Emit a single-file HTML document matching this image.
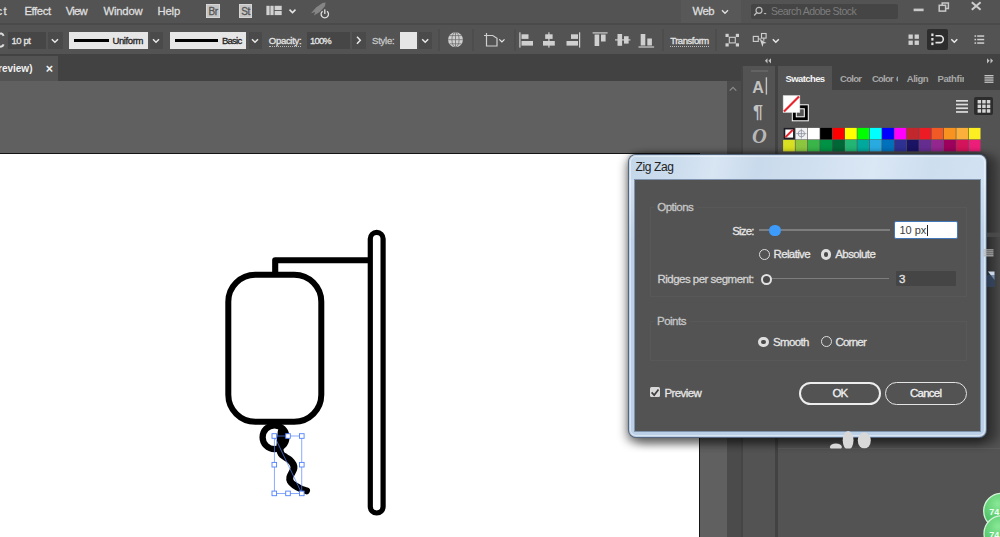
<!DOCTYPE html>
<html><head><meta charset="utf-8"><title>Zig Zag</title>
<style>
html,body{margin:0;padding:0;}
body{width:1000px;height:537px;overflow:hidden;position:relative;background:#535353;font-family:"Liberation Sans",sans-serif;}
.a{position:absolute;}
.t{position:absolute;white-space:pre;}
svg{position:absolute;left:0;top:0;overflow:visible;}
</style></head><body>
<!-- menubar -->
<div class="a" style="left:0;top:0;width:1000px;height:24px;background:#535353"></div>
<div class="a" style="left:681px;top:0;width:60px;height:24px;background:#585858"></div>
<div class="a" style="left:0;top:23px;width:1000px;height:2px;background:#4a4a4a"></div>
<!-- Br / St -->
<div class="a" style="left:206.2px;top:4.3px;width:13.6px;height:13.7px;background:#c4c4c4;box-shadow:inset 0 0 0 1px #d6d6d6"></div>
<div class="a" style="left:238.6px;top:4.3px;width:13.6px;height:13.7px;background:#c4c4c4;box-shadow:inset 0 0 0 1px #d6d6d6"></div>
<!-- search -->
<div class="a" style="left:751px;top:3.5px;width:147px;height:15px;background:#454545;border-radius:2px"></div>
<!-- control bar fields -->
<div class="a" style="left:8px;top:32px;width:38px;height:16.5px;background:#464646"></div>
<div class="a" style="left:47.5px;top:32px;width:15px;height:16.5px;background:#4a4a4a"></div>
<div class="a" style="left:69px;top:32px;width:79px;height:16.7px;background:#e6e6e6"></div>
<div class="a" style="left:149.5px;top:32px;width:13px;height:16.5px;background:#4a4a4a"></div>
<div class="a" style="left:170px;top:32px;width:76.3px;height:16.7px;background:#e6e6e6"></div>
<div class="a" style="left:248.5px;top:32px;width:13px;height:16.5px;background:#4a4a4a"></div>
<div class="a" style="left:307px;top:32px;width:43px;height:16.5px;background:#464646"></div>
<div class="a" style="left:352px;top:32px;width:13.5px;height:16.5px;background:#4a4a4a"></div>
<div class="a" style="left:400px;top:32px;width:17px;height:16.7px;background:#e6e6e6"></div>
<div class="a" style="left:419px;top:32px;width:12.5px;height:16.5px;background:#4a4a4a"></div>
<div class="a" style="left:927px;top:29px;width:20.5px;height:20.5px;background:#2d2d2d;border-radius:2px"></div>
<!-- stroke previews -->
<div class="a" style="left:74px;top:39px;width:35px;height:2.6px;background:#000"></div>
<div class="a" style="left:175px;top:39px;width:43px;height:2.6px;background:#000"></div>
<!-- doc tab bar -->
<div class="a" style="left:0;top:54px;width:1000px;height:27px;background:#424242"></div>
<div class="a" style="left:0;top:56.2px;width:58px;height:24.8px;background:#535353"></div>
<span class="t" style="left:45.7px;top:61.5px;font-size:12.5px;line-height:14px;font-weight:700;color:#f2f2f2">×</span>
<!-- canvas -->
<div class="a" style="left:0;top:80.5px;width:727px;height:457px;background:#606060"></div>
<div class="a" style="left:-2px;top:153px;width:700px;height:400px;background:#fff;border:1px solid #141414"></div>
<!-- scrollbar -->
<div class="a" style="left:727px;top:80.5px;width:14px;height:457px;background:#4b4b4b"></div>
<!-- dock -->
<div class="a" style="left:741px;top:54px;width:259px;height:483px;background:#424242"></div>
<div class="a" style="left:741px;top:66px;width:1.5px;height:471px;background:#454545"></div>
<div class="a" style="left:742.5px;top:66px;width:32.5px;height:471px;background:#535353"></div>
<div class="a" style="left:750.5px;top:70px;width:17px;height:1.5px;background:#636363"></div>
<div class="a" style="left:777.5px;top:66px;width:223px;height:471px;background:#535353"></div>
<div class="a" style="left:832px;top:66px;width:168px;height:24px;background:#424242"></div>
<div class="a" style="left:777.5px;top:448px;width:223px;height:1px;background:#5c5c5c"></div>
<!-- clipped tab titles -->
<div class="a" style="left:871.9px;top:72.5px;width:26.6px;height:12px;overflow:hidden"><span class="t" style="left:0;top:0;font-size:9.5px;line-height:11px;font-weight:700;color:#a8a8a8;letter-spacing:-0.72px;word-spacing:1px">Color Guide</span></div>
<div class="a" style="left:937.4px;top:72.5px;width:26.8px;height:12px;overflow:hidden"><span class="t" style="left:0;top:0;font-size:9.5px;line-height:11px;font-weight:700;color:#a8a8a8;letter-spacing:-0.35px">Pathfinder</span></div>
<!-- list/grid buttons -->
<div class="a" style="left:974px;top:96.5px;width:19px;height:18.7px;background:#2c2c2c;border-radius:2px"></div>
<!-- icons svg (under dialog) -->
<svg width="1000" height="537" viewBox="0 0 1000 537">
<!-- ARTWORK -->
<g fill="none" stroke="#000" stroke-linecap="round" stroke-linejoin="miter">
<rect x="370.3" y="232.4" width="12.8" height="280.6" rx="6.4" stroke-width="5.2"/>
<path d="M275.2 273 V260.3 H370" stroke-width="6.1" stroke-linecap="butt" stroke-linejoin="round"/>
<rect x="228.3" y="274.8" width="93" height="147" rx="27" stroke-width="6"/>
<circle cx="274.5" cy="437.2" r="11.9" stroke-width="6.3"/>
<path d="M281.3 431.5 C281.1 433.1 280.5 438.1 280.3 441.0 C280.1 443.9 279.8 446.9 279.9 449.0 C280.0 451.1 280.3 452.4 281.2 453.8 C282.1 455.2 284.0 456.2 285.5 457.3 C287.0 458.4 289.0 459.3 290.3 460.5 C291.6 461.7 292.7 463.2 293.3 464.5 C293.9 465.8 294.1 466.9 293.9 468.3 C293.7 469.7 292.7 471.2 292.0 472.6 C291.3 474.0 290.2 475.4 289.9 476.9 C289.6 478.3 289.6 479.9 290.3 481.3 C291.0 482.7 292.5 484.0 294.2 485.2 C295.9 486.4 298.3 487.7 300.4 488.6 C302.4 489.5 305.5 490.4 306.5 490.8" stroke-width="7"/>
</g>
<!-- selection -->
<g fill="none" stroke="#5a86ff" stroke-width="0.7">
<rect x="274.3" y="436" width="27.5" height="57.4"/>
<path d="M274.3 436 L301.8 493.4"/>
</g>
<g fill="#fff" stroke="#4f80ff" stroke-width="0.9">
<rect x="272" y="433.7" width="4.6" height="4.6"/><rect x="285.7" y="433.7" width="4.6" height="4.6"/><rect x="299.5" y="433.7" width="4.6" height="4.6"/>
<rect x="272" y="462.4" width="4.6" height="4.6"/><rect x="299.5" y="462.4" width="4.6" height="4.6"/>
<rect x="272" y="491.1" width="4.6" height="4.6"/><rect x="285.7" y="491.1" width="4.6" height="4.6"/><rect x="299.5" y="491.1" width="4.6" height="4.6"/>
</g>
<!-- SWATCHES -->
<g id="sw"><rect x="784.50" y="128.70" width="9.38" height="9.70" fill="#fff" stroke="#1c1c24" stroke-width="1.6"/>
<path d="M785.30 137.40 L792.88 129.70" stroke="#e8242c" stroke-width="2"/>
<rect x="795.48" y="127.90" width="11.78" height="11.50" fill="#f2f2f2"/>
<circle cx="801.36" cy="133.65" r="3.2" fill="none" stroke="#8a8fa0" stroke-width=".8"/>
<path d="M796.27 133.65 H806.45 M801.36 128.70 V138.60" stroke="#8a8fa0" stroke-width=".8"/>
<rect x="807.85" y="127.90" width="11.78" height="11.50" fill="#ffffff"/>
<rect x="820.23" y="127.90" width="11.78" height="11.50" fill="#000000"/>
<rect x="832.60" y="127.90" width="11.78" height="11.50" fill="#ff0000"/>
<rect x="844.98" y="127.90" width="11.78" height="11.50" fill="#ffff00"/>
<rect x="857.35" y="127.90" width="11.78" height="11.50" fill="#00ff00"/>
<rect x="869.73" y="127.90" width="11.78" height="11.50" fill="#00ffff"/>
<rect x="882.10" y="127.90" width="11.78" height="11.50" fill="#0000ff"/>
<rect x="894.48" y="127.90" width="11.78" height="11.50" fill="#ff00ff"/>
<rect x="906.85" y="127.90" width="11.78" height="11.50" fill="#c1272d"/>
<rect x="919.23" y="127.90" width="11.78" height="11.50" fill="#ed1c24"/>
<rect x="931.60" y="127.90" width="11.78" height="11.50" fill="#f15a24"/>
<rect x="943.98" y="127.90" width="11.78" height="11.50" fill="#f7931e"/>
<rect x="956.35" y="127.90" width="11.78" height="11.50" fill="#fbb03b"/>
<rect x="968.73" y="127.90" width="11.78" height="11.50" fill="#fcee21"/>
<rect x="783.10" y="139.90" width="11.78" height="11.50" fill="#d9e021"/>
<rect x="795.48" y="139.90" width="11.78" height="11.50" fill="#8cc63f"/>
<rect x="807.85" y="139.90" width="11.78" height="11.50" fill="#39b54a"/>
<rect x="820.23" y="139.90" width="11.78" height="11.50" fill="#009245"/>
<rect x="832.60" y="139.90" width="11.78" height="11.50" fill="#006837"/>
<rect x="844.98" y="139.90" width="11.78" height="11.50" fill="#22b573"/>
<rect x="857.35" y="139.90" width="11.78" height="11.50" fill="#00a99d"/>
<rect x="869.73" y="139.90" width="11.78" height="11.50" fill="#29abe2"/>
<rect x="882.10" y="139.90" width="11.78" height="11.50" fill="#0071bc"/>
<rect x="894.48" y="139.90" width="11.78" height="11.50" fill="#2e3192"/>
<rect x="906.85" y="139.90" width="11.78" height="11.50" fill="#1b1464"/>
<rect x="919.23" y="139.90" width="11.78" height="11.50" fill="#662d91"/>
<rect x="931.60" y="139.90" width="11.78" height="11.50" fill="#93278f"/>
<rect x="943.98" y="139.90" width="11.78" height="11.50" fill="#9e005d"/>
<rect x="956.35" y="139.90" width="11.78" height="11.50" fill="#d4145a"/>
<rect x="968.73" y="139.90" width="11.78" height="11.50" fill="#ed1e79"/></g>
<!-- fill / stroke -->
<rect x="792.3" y="104.8" width="16" height="16" fill="#000" stroke="#fff" stroke-width="1"/>
<rect x="796.3" y="108.8" width="8" height="8" fill="#535353" stroke="#fff" stroke-width="1"/>
<rect x="783.2" y="95.7" width="16.6" height="16.6" fill="#fff" stroke="#e8e8e8" stroke-width=".6"/>
<path d="M784 111.5 L799 96.5" stroke="#e8242c" stroke-width="2.2"/>
<!-- list icon -->
<g fill="#dcdcdc">
<rect x="956" y="100" width="12" height="1.7"/><rect x="956" y="103.7" width="12" height="1.7"/><rect x="956" y="107.4" width="12" height="1.7"/><rect x="956" y="111.1" width="12" height="1.7"/>
</g>
<g fill="#d6d6d6">
<rect x="977.6" y="100" width="3.5" height="3.5"/><rect x="982.2" y="100" width="3.5" height="3.5"/><rect x="986.8" y="100" width="3.5" height="3.5"/>
<rect x="977.6" y="104.6" width="3.5" height="3.5"/><rect x="982.2" y="104.6" width="3.5" height="3.5"/><rect x="986.8" y="104.6" width="3.5" height="3.5"/>
<rect x="977.6" y="109.2" width="3.5" height="3.5"/><rect x="982.2" y="109.2" width="3.5" height="3.5"/><rect x="986.8" y="109.2" width="3.5" height="3.5"/>
</g>
<!-- panel menu -->
<g fill="#c4c4c4"><rect x="984.5" y="75" width="9" height="1.3"/><rect x="984.5" y="77.2" width="9" height="1.3"/><rect x="984.5" y="79.4" width="9" height="1.3"/><rect x="984.5" y="81.6" width="9" height="1.3"/></g>
<!-- collapse arrows -->
<g fill="#c0c0c0">
<path d="M767.5 58.2 l-2.6 2.6 l2.6 2.6z M771 58.2 l-2.6 2.6 l2.6 2.6z"/>
<path d="M987 58.2 l2.6 2.6 l-2.6 2.6z M990.5 58.2 l2.6 2.6 l-2.6 2.6z"/>
</g>
<!-- scroll chevron -->
<path d="M729.7 90.6 l3.3 -3.3 l3.3 3.3" fill="none" stroke="#8a8a8a" stroke-width="1.3"/>
<!-- dock icons -->
<g fill="#c2c2c2">
<text x="752.2" y="92.7" font-family="Liberation Sans, sans-serif" font-size="16" font-weight="700" fill="#c2c2c2">A</text>
<rect x="765.7" y="77.3" width="1.4" height="17.3"/>
<text x="753" y="118" font-family="Liberation Sans, sans-serif" font-size="18" font-weight="700" fill="#c2c2c2">¶</text>
<text x="752" y="143.2" font-family="Liberation Serif, serif" font-size="20.5" font-style="italic" font-weight="700" fill="#b8b8b8">O</text>
</g>
<!-- TOP ICONS -->
<!-- layout icon -->
<g fill="#d2d2d2"><rect x="266.4" y="5.8" width="3.2" height="9.3"/><rect x="270.4" y="5.8" width="3.2" height="9.3"/><rect x="274.6" y="5.8" width="7.1" height="4.2"/><rect x="274.6" y="10.9" width="7.1" height="4.2"/></g>
<path d="M289.5 9.6 l3 3 l3 -3" fill="none" stroke="#e6e6e6" stroke-width="1.5"/>
<!-- rocket/power -->
<g>
<path d="M311 13.2 L316 7.5 L322.5 3 L325.6 2.6 L325 6 L320.5 11.5 L314 15.5 L315.2 12 z" fill="#858585"/>
<circle cx="324.8" cy="14.2" r="5.2" fill="#535353"/>
<path d="M322.6 11.2 A3.7 3.7 0 1 0 327 11.2" fill="none" stroke="#e2e2e2" stroke-width="1.3"/>
<rect x="324.15" y="9.4" width="1.3" height="4.6" fill="#e2e2e2"/>
</g>
<!-- web chevron -->
<path d="M722 10.3 l3 3 l3 -3" fill="none" stroke="#e0e0e0" stroke-width="1.4"/>
<!-- search icon -->
<circle cx="759" cy="10.3" r="3" fill="none" stroke="#bdbdbd" stroke-width="1.2"/>
<path d="M756.8 12.6 l-2.6 2.8" stroke="#bdbdbd" stroke-width="1.4"/>
<path d="M763.5 13 l1.6 1.6 l1.6 -1.6z" fill="#bdbdbd"/>
<!-- window controls -->
<rect x="913.6" y="8.6" width="10" height="2.6" fill="#c8c8c8"/>
<g fill="none" stroke="#c8c8c8" stroke-width="1.5"><rect x="939.2" y="5.3" width="6.4" height="5.8"/><path d="M942.2 5 V3 H948.4 V8.6 H946"/></g>
<path d="M971.8 2.2 l8.8 7.6 M980.6 2.2 l-8.8 7.6" stroke="#cdcdcd" stroke-width="2"/>
<!-- control bar chevrons -->
<g fill="none" stroke="#e8e8e8" stroke-width="1.5">
<path d="M51.8 39.2 l3.1 3 l3.1 -3"/>
<path d="M153 39.2 l3 3 l3 -3"/>
<path d="M252 39.2 l3 3 l3 -3"/>
<path d="M357 36.8 l3.3 3.5 l-3.3 3.5"/>
<path d="M422.2 39.2 l3 3 l3 -3"/>
<path d="M499.3 39.4 l2.6 2.6 l2.6 -2.6" stroke-width="1.2"/>
<path d="M772.8 39.2 l3 3 l3 -3"/>
<path d="M951.3 39.2 l3 3 l3 -3"/>
</g>
<!-- stepper arrows at left -->
<path d="M-2 34.6 q4 -2.6 5.6 1.2 M-2 45.6 q4 2.6 5.6 -1.2" fill="none" stroke="#dedede" stroke-width="2"/>
<!-- separators -->
<g fill="#484848"><rect x="438.5" y="29" width="1" height="22"/><rect x="472.5" y="29" width="1" height="22"/><rect x="514.5" y="29" width="1" height="22"/><rect x="662.5" y="29" width="1" height="22"/><rect x="715.5" y="29" width="1" height="22"/></g>
<!-- globe -->
<circle cx="455.5" cy="39.7" r="7.4" fill="#cfcfcf"/>
<g fill="none" stroke="#707070" stroke-width=".8"><path d="M455.5 32.3 V47.1 M448.1 39.7 H462.9"/><ellipse cx="455.5" cy="39.7" rx="3.6" ry="7.4"/><path d="M449.6 35.6 H461.4 M449.6 43.8 H461.4"/></g>
<!-- shape icon -->
<g fill="none" stroke="#cfcfcf" stroke-width="1.2"><path d="M486.5 33 V46 H497 V38.3 L492.8 35.5 H484"/><path d="M484 35.5 h2"/></g>
<!-- align icons -->
<g fill="#cfcfcf">
<rect x="519.3" y="32.3" width="1.2" height="15.3"/><rect x="521.5" y="34.3" width="7" height="4.6"/><rect x="521.5" y="41" width="11.5" height="4.6"/>
<rect x="548.3" y="32.3" width="1.2" height="15.3"/><rect x="545.2" y="34.3" width="7.4" height="4.6"/><rect x="543" y="41" width="11.8" height="4.6"/>
<rect x="579" y="32.3" width="1.2" height="15.3"/><rect x="571" y="34.3" width="7" height="4.6"/><rect x="566.5" y="41" width="11.5" height="4.6"/>
<rect x="592.6" y="32.3" width="15" height="1.2"/><rect x="594.6" y="34.5" width="4.6" height="11.5"/><rect x="601" y="34.5" width="4.6" height="7"/>
<rect x="615" y="39.3" width="15.4" height="1.2"/><rect x="617.5" y="34" width="4.6" height="11.8"/><rect x="624" y="36.2" width="4.6" height="7.4"/>
<rect x="638.5" y="46.4" width="15.6" height="1.2"/><rect x="640.7" y="34" width="4.6" height="11.5"/><rect x="647.3" y="38.5" width="4.6" height="7"/>
</g>
<!-- isolate icon -->
<g fill="#cfcfcf"><rect x="725.5" y="33.8" width="3.2" height="3.2"/><rect x="735.8" y="33.8" width="3.2" height="3.2"/><rect x="725.5" y="43.3" width="3.2" height="3.2"/><rect x="735.8" y="43.3" width="3.2" height="3.2"/><rect x="729.3" y="37.3" width="6" height="5.6" fill="none" stroke="#cfcfcf" stroke-width="1.1"/></g>
<!-- select similar icon -->
<g fill="none" stroke="#cfcfcf" stroke-width="1.1"><rect x="753.3" y="36.4" width="5" height="5"/><rect x="761.5" y="33.5" width="4.6" height="4.6"/><path d="M758.3 39 h3 M763.8 38.2 v2.5"/></g>
<path d="M759.8 39.3 l6.8 3.6 l-3.2 .7 l-.9 3.3z" fill="#cfcfcf"/>
<!-- 4 squares -->
<g fill="#cfcfcf"><rect x="908.5" y="34.5" width="4.3" height="4.3"/><rect x="914.6" y="34.5" width="4.3" height="4.3"/><rect x="908.5" y="40.6" width="4.3" height="4.3"/><rect x="914.6" y="40.6" width="4.3" height="4.3"/></g>
<!-- dark button icon -->
<g fill="#e4e4e4"><rect x="931.3" y="33.5" width="2.2" height="2.6"/><rect x="931.3" y="38" width="2.2" height="2.6"/><rect x="931.3" y="42.5" width="2.2" height="2.6"/></g>
<path d="M935.5 35.8 h4.4 a3.4 3.4 0 0 1 0 6.8 h-4.4" fill="none" stroke="#e4e4e4" stroke-width="1.6"/>
<!-- list icon right -->
<g fill="#cfcfcf"><rect x="974.5" y="35.3" width="1.6" height="1.5"/><rect x="977.2" y="35.3" width="7" height="1.5"/><rect x="974.5" y="38.8" width="1.6" height="1.5"/><rect x="977.2" y="38.8" width="7" height="1.5"/><rect x="974.5" y="42.3" width="1.6" height="1.5"/><rect x="977.2" y="42.3" width="7" height="1.5"/></g>
</svg>

<!-- dialog -->
<div class="a" style="left:628.5px;top:155px;width:357px;height:282px;border-radius:7px;background:#bbd0e6;box-shadow:0 0 0 1px #56667c, -1px 4px 10px 2px rgba(0,0,0,.45), 9px 3px 8px 4px rgba(0,0,0,.3), 0 -2px 4px 0 rgba(0,0,0,.3);"></div>
<div class="a" style="left:628.5px;top:155px;width:357px;height:30px;border-radius:7px 7px 0 0;background:linear-gradient(100deg,#c4d7ea 0%,#ccddee 14%,#d8e5f3 24%,#c9daec 36%,#d1e0f0 52%,#dae7f5 68%,#cddeef 84%,#d3e2f2 100%);"></div>
<div class="a" style="left:628.5px;top:180px;width:357px;height:60px;background:linear-gradient(180deg,rgba(209,224,240,1),rgba(187,208,230,0));"></div>
<div class="a" style="left:629.5px;top:156px;width:355px;height:280px;border-radius:6px;box-shadow:inset 0 0 0 1px rgba(255,255,255,.45);"></div>
<div class="a" style="left:635px;top:179.7px;width:345px;height:251.5px;background:#535353;box-shadow:0 0 0 1px #7f93ad"></div>
<!-- group boxes -->
<div class="a" style="left:649.5px;top:207px;width:317px;height:90px;border:1px solid #585858;box-sizing:border-box"></div>
<div class="a" style="left:649.5px;top:321px;width:317px;height:40px;border:1px solid #585858;box-sizing:border-box"></div>
<div class="a" style="left:654px;top:200px;width:43px;height:14px;background:#535353"></div>
<div class="a" style="left:654px;top:314px;width:36px;height:14px;background:#535353"></div>
<!-- sliders -->
<div class="a" style="left:758.5px;top:229.3px;width:131px;height:1.4px;background:#7d7d7d"></div>
<div class="a" style="left:769px;top:224.5px;width:11.5px;height:11.5px;border-radius:50%;background:#3d9bfb"></div>
<div class="a" style="left:768px;top:278px;width:121px;height:1.4px;background:#7d7d7d"></div>
<div class="a" style="left:761px;top:273.5px;width:7px;height:7px;border-radius:50%;border:2px solid #e2e2e2;background:#4a4a4a"></div>
<!-- inputs -->
<div class="a" style="left:894px;top:221px;width:64px;height:18.3px;box-sizing:border-box;border:1.7px solid #4278ba;background:#fff;border-radius:2px"></div>
<div class="a" style="left:926.6px;top:224.5px;width:1px;height:11.5px;background:#222"></div>
<div class="a" style="left:896px;top:271.2px;width:60px;height:15px;background:#454545;border-radius:1px"></div>
<!-- radios -->
<div class="a" style="left:759px;top:249px;width:9px;height:9px;border-radius:50%;border:1.2px solid #dcdcdc"></div>
<div class="a" style="left:820.5px;top:249.2px;width:4.4px;height:4.4px;border-radius:50%;border:3.2px solid #dedede;background:#4a4a4a"></div>
<div class="a" style="left:758.2px;top:336.6px;width:4.4px;height:4.4px;border-radius:50%;border:3.2px solid #dedede;background:#4a4a4a"></div>
<div class="a" style="left:820.6px;top:336.4px;width:9px;height:9px;border-radius:50%;border:1.2px solid #dcdcdc"></div>
<!-- checkbox -->
<div class="a" style="left:649.7px;top:387.2px;width:10.3px;height:10.3px;background:#d9d9d9;border-radius:1.5px"></div>
<!-- buttons -->
<div class="a" style="left:799px;top:381.5px;width:82px;height:23px;box-sizing:border-box;border:2px solid #ededed;border-radius:12px"></div>
<div class="a" style="left:885px;top:381.5px;width:82px;height:23px;box-sizing:border-box;border:1.2px solid #e4e4e4;border-radius:12px"></div>
<span class="t" style="left:-3.5px;top:4.0px;font-size:11.3px;line-height:14px;letter-spacing:1.25px;color:#dedede;font-weight:400;-webkit-text-stroke:0.3px;">ct</span>
<span class="t" style="left:24.4px;top:4.0px;font-size:11.3px;line-height:14px;letter-spacing:-0.40px;color:#dedede;font-weight:400;-webkit-text-stroke:0.3px;">Effect</span>
<span class="t" style="left:65.7px;top:4.0px;font-size:11.3px;line-height:14px;letter-spacing:-0.77px;color:#dedede;font-weight:400;-webkit-text-stroke:0.3px;">View</span>
<span class="t" style="left:103.5px;top:4.0px;font-size:11.3px;line-height:14px;letter-spacing:-0.20px;color:#dedede;font-weight:400;-webkit-text-stroke:0.3px;">Window</span>
<span class="t" style="left:157.5px;top:4.0px;font-size:11.3px;line-height:14px;letter-spacing:-0.18px;color:#dedede;font-weight:400;-webkit-text-stroke:0.3px;">Help</span>
<span class="t" style="left:208.6px;top:5.6px;font-size:10px;line-height:12px;letter-spacing:-0.40px;color:#555;font-weight:400;-webkit-text-stroke:0.3px;">Br</span>
<span class="t" style="left:241.2px;top:5.6px;font-size:10px;line-height:12px;letter-spacing:-0.33px;color:#555;font-weight:400;-webkit-text-stroke:0.3px;">St</span>
<span class="t" style="left:692.5px;top:4.0px;font-size:11.3px;line-height:14px;letter-spacing:-0.51px;color:#dedede;font-weight:400;-webkit-text-stroke:0.3px;">Web</span>
<span class="t" style="left:771.0px;top:5.0px;font-size:10.5px;line-height:13px;letter-spacing:-0.56px;color:#7d7d7d;font-weight:400;">Search Adobe Stock</span>
<span class="t" style="left:11.4px;top:35.0px;font-size:9.5px;line-height:11px;letter-spacing:-0.39px;color:#e4e4e4;font-weight:400;-webkit-text-stroke:0.3px;">10 pt</span>
<span class="t" style="left:112.5px;top:35.0px;font-size:9.5px;line-height:11px;letter-spacing:-0.40px;color:#222;font-weight:400;-webkit-text-stroke:0.3px;">Uniform</span>
<span class="t" style="left:222.0px;top:35.0px;font-size:9.5px;line-height:11px;letter-spacing:-0.75px;color:#222;font-weight:400;-webkit-text-stroke:0.3px;">Basic</span>
<span class="t" style="left:268.8px;top:35.0px;font-size:9.5px;line-height:11px;letter-spacing:-0.29px;color:#e4e4e4;font-weight:400;border-bottom:1px dotted #bbb;-webkit-text-stroke:0.3px;">Opacity:</span>
<span class="t" style="left:310.0px;top:35.0px;font-size:9.5px;line-height:11px;letter-spacing:-0.83px;color:#e4e4e4;font-weight:400;-webkit-text-stroke:0.3px;">100%</span>
<span class="t" style="left:372.0px;top:35.0px;font-size:9.5px;line-height:11px;letter-spacing:-0.21px;color:#c8c8c8;font-weight:400;-webkit-text-stroke:0.3px;">Style:</span>
<span class="t" style="left:670.2px;top:35.0px;font-size:9.5px;line-height:11px;letter-spacing:-0.48px;color:#e4e4e4;font-weight:400;border-bottom:1px dotted #bbb;-webkit-text-stroke:0.3px;">Transform</span>
<span class="t" style="left:-2.0px;top:63.0px;font-size:10px;line-height:12px;letter-spacing:0.00px;color:#f0f0f0;font-weight:700;">review)</span>
<span class="t" style="left:785.6px;top:72.7px;font-size:9.5px;line-height:11px;letter-spacing:-0.62px;color:#f4f4f4;font-weight:700;">Swatches</span>
<span class="t" style="left:840.1px;top:72.7px;font-size:9.5px;line-height:11px;letter-spacing:-0.72px;color:#a8a8a8;font-weight:700;">Color</span>
<span class="t" style="left:906.8px;top:72.7px;font-size:9.5px;line-height:11px;letter-spacing:-0.51px;color:#a8a8a8;font-weight:700;">Align</span>
<span class="t" style="left:635.5px;top:160.0px;font-size:12px;line-height:14px;letter-spacing:-0.36px;color:#222;font-weight:400;">Zig Zag</span>
<span class="t" style="left:657.3px;top:199.5px;font-size:11.5px;line-height:14px;letter-spacing:-0.52px;color:#c6c6c6;font-weight:400;-webkit-text-stroke:0.3px;">Options</span>
<span class="t" style="left:732.2px;top:224.0px;font-size:11.5px;line-height:14px;letter-spacing:-0.82px;color:#e6e6e6;font-weight:400;-webkit-text-stroke:0.3px;">Size:</span>
<span class="t" style="left:773.5px;top:247.3px;font-size:11.5px;line-height:14px;letter-spacing:-0.63px;color:#e6e6e6;font-weight:400;-webkit-text-stroke:0.3px;">Relative</span>
<span class="t" style="left:835.3px;top:247.3px;font-size:11.5px;line-height:14px;letter-spacing:-0.60px;color:#e6e6e6;font-weight:400;-webkit-text-stroke:0.3px;">Absolute</span>
<span class="t" style="left:657.5px;top:272.0px;font-size:11.5px;line-height:14px;letter-spacing:-0.52px;color:#d2d2d2;font-weight:400;-webkit-text-stroke:0.3px;">Ridges per segment:</span>
<span class="t" style="left:899.5px;top:223.8px;font-size:11px;line-height:13px;letter-spacing:-0.02px;color:#3c3c3c;font-weight:400;">10 px</span>
<span class="t" style="left:899.0px;top:271.8px;font-size:11.5px;line-height:14px;letter-spacing:-0.61px;color:#e6e6e6;font-weight:400;-webkit-text-stroke:0.3px;">3</span>
<span class="t" style="left:657.1px;top:313.7px;font-size:11.5px;line-height:14px;letter-spacing:-0.53px;color:#c6c6c6;font-weight:400;-webkit-text-stroke:0.3px;">Points</span>
<span class="t" style="left:773.1px;top:334.8px;font-size:11.5px;line-height:14px;letter-spacing:-0.66px;color:#e6e6e6;font-weight:400;-webkit-text-stroke:0.3px;">Smooth</span>
<span class="t" style="left:835.4px;top:334.8px;font-size:11.5px;line-height:14px;letter-spacing:-0.76px;color:#e6e6e6;font-weight:400;-webkit-text-stroke:0.3px;">Corner</span>
<span class="t" style="left:664.4px;top:385.6px;font-size:11.5px;line-height:14px;letter-spacing:-0.57px;color:#e6e6e6;font-weight:400;-webkit-text-stroke:0.3px;">Preview</span>
<span class="t" style="left:832.5px;top:386.0px;font-size:11.5px;line-height:14px;letter-spacing:-1.06px;color:#f2f2f2;font-weight:400;-webkit-text-stroke:0.3px;">OK</span>
<span class="t" style="left:910.0px;top:386.0px;font-size:11.5px;line-height:14px;letter-spacing:-0.75px;color:#f2f2f2;font-weight:400;-webkit-text-stroke:0.3px;">Cancel</span>
<svg width="1000" height="537" viewBox="0 0 1000 537">
<path d="M651.6 392.3 l2.6 2.8 l4.3 -5.6" fill="none" stroke="#3e3e3e" stroke-width="1.7"/>
<clipPath id="bc"><rect x="820" y="425" width="70" height="23.6"/></clipPath><g fill="#d8d8d8" clip-path="url(#bc)"><ellipse cx="848.1" cy="440.3" rx="5.4" ry="9.3"/><ellipse cx="864.3" cy="440.6" rx="6.5" ry="8"/><ellipse cx="835.9" cy="447" rx="6" ry="3.6"/></g>
<g fill="#b4b4b4"><rect x="983.5" y="249.3" width="10" height="1.2"/><rect x="983.5" y="251.3" width="10" height="1.2"/><rect x="983.5" y="253.3" width="10" height="1.2"/><rect x="983.5" y="255.2" width="10" height="1.2"/></g>
<path d="M988 271.5 h6.5 v8.5 z" fill="#c8d8ea"/><rect x="987" y="275" width="8" height="12" fill="#2f4a73" opacity=".55"/>
<rect x="987" y="232.6" width="13" height="4.5" fill="#4e4e4e" opacity=".7"/>
<defs><radialGradient id="gg" cx="40%" cy="30%" r="75%"><stop offset="0" stop-color="#8ae896"/><stop offset="1" stop-color="#35b553"/></radialGradient></defs>
<circle cx="1001.3" cy="511" r="17.6" fill="url(#gg)" stroke="#d4f2da" stroke-width="1.3"/>
<text x="989.2" y="515" font-family="Liberation Sans, sans-serif" font-size="9" font-weight="700" fill="#f0fff2">74</text>
<circle cx="1001.6" cy="533.5" r="17.6" fill="url(#gg)" stroke="#d4f2da" stroke-width="1.3"/>
<text x="989.2" y="537.6" font-family="Liberation Sans, sans-serif" font-size="9" font-weight="700" fill="#f0fff2">74</text>
</svg>

</body></html>
